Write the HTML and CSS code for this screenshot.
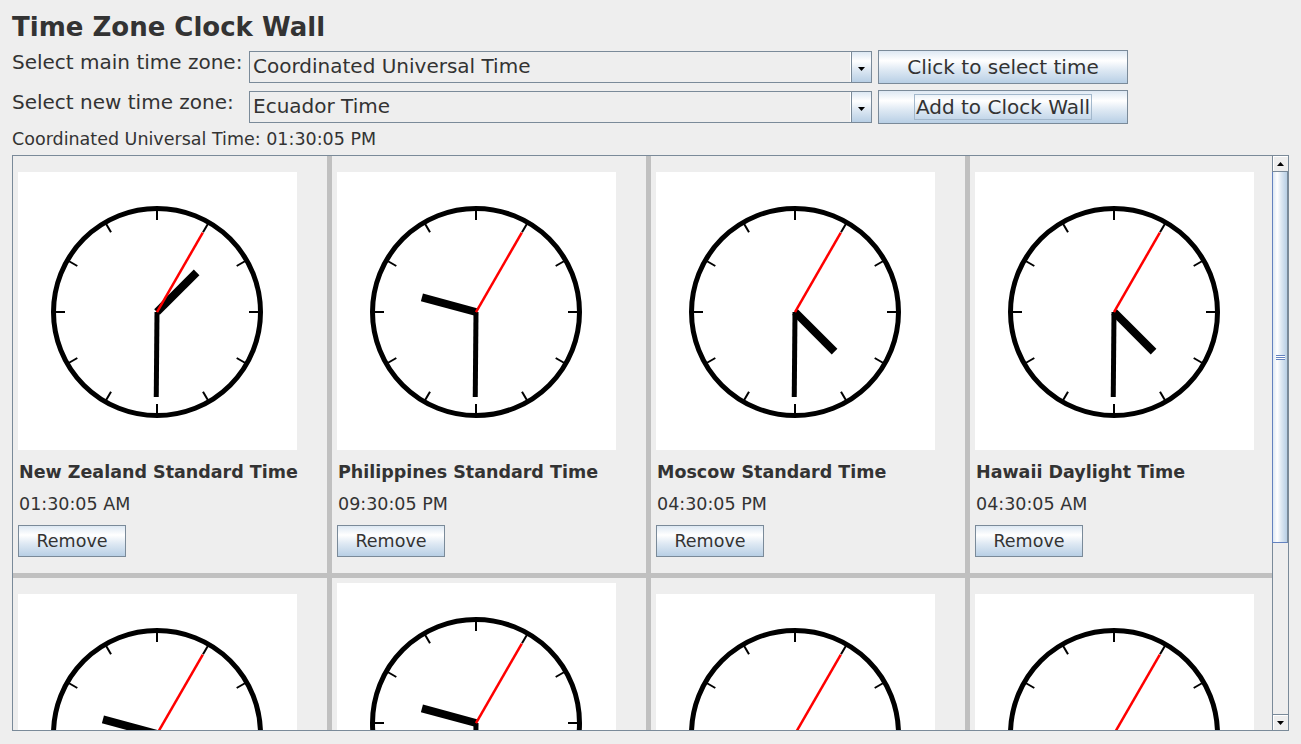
FILE: index.html
```html
<!DOCTYPE html>
<html lang="en">
<head>
<meta charset="utf-8">
<title>Time Zone Clock Wall</title>
<link rel="stylesheet" href="styles.css">
</head>
<body>
<svg class="defs" width="0" height="0" aria-hidden="true">
  <defs>
    <g id="face">
      <circle cx="139" cy="140" r="103.5" fill="none" stroke="#000" stroke-width="5"/>
      <g stroke="#000" stroke-width="2">
        <line x1="139" y1="48" x2="139" y2="38"/>
        <line x1="139" y1="48" x2="139" y2="38" transform="rotate(30 139 140)"/>
        <line x1="139" y1="48" x2="139" y2="38" transform="rotate(60 139 140)"/>
        <line x1="139" y1="48" x2="139" y2="38" transform="rotate(90 139 140)"/>
        <line x1="139" y1="48" x2="139" y2="38" transform="rotate(120 139 140)"/>
        <line x1="139" y1="48" x2="139" y2="38" transform="rotate(150 139 140)"/>
        <line x1="139" y1="48" x2="139" y2="38" transform="rotate(180 139 140)"/>
        <line x1="139" y1="48" x2="139" y2="38" transform="rotate(210 139 140)"/>
        <line x1="139" y1="48" x2="139" y2="38" transform="rotate(240 139 140)"/>
        <line x1="139" y1="48" x2="139" y2="38" transform="rotate(270 139 140)"/>
        <line x1="139" y1="48" x2="139" y2="38" transform="rotate(300 139 140)"/>
        <line x1="139" y1="48" x2="139" y2="38" transform="rotate(330 139 140)"/>
      </g>
    </g>
  </defs>
</svg>

<div class="app">
  <h1 class="title">Time Zone Clock Wall</h1>

  <div class="controls">
    <span class="ctl-label">Select main time zone:</span>
    <div class="combo">
      <span class="combo-text">Coordinated Universal Time</span>
      <span class="combo-arrow"><svg width="7" height="4" viewBox="0 0 7 4"><polygon points="0,0 7,0 3.5,4" fill="#000"/></svg></span>
    </div>
    <button class="btn" type="button">Click to select time</button>

    <span class="ctl-label">Select new time zone:</span>
    <div class="combo">
      <span class="combo-text">Ecuador Time</span>
      <span class="combo-arrow"><svg width="7" height="4" viewBox="0 0 7 4"><polygon points="0,0 7,0 3.5,4" fill="#000"/></svg></span>
    </div>
    <button class="btn" type="button"><span class="focus">Add to Clock Wall</span></button>
  </div>

  <div class="main-time">Coordinated Universal Time: 01:30:05 PM</div>

  <div class="scrollpane">
    <div class="viewport">
      <div class="wall">
        <div class="cell">
          <svg class="clock" viewBox="0 0 279 278"><use href="#face"/>
            <line class="hh" x1="139" y1="140" x2="139" y2="84" transform="rotate(45.04 139 140)"/>
            <line class="mh" x1="139" y1="140" x2="139" y2="55" transform="rotate(180.5 139 140)"/>
            <line class="sh" x1="139" y1="140" x2="139" y2="48.4" transform="rotate(30 139 140)"/>
          </svg>
          <div class="zone">New Zealand Standard Time</div>
          <div class="time">01:30:05 AM</div>
          <button class="remove" type="button">Remove</button>
        </div>
        <div class="cell">
          <svg class="clock" viewBox="0 0 279 278"><use href="#face"/>
            <line class="hh" x1="139" y1="140" x2="139" y2="84" transform="rotate(285.04 139 140)"/>
            <line class="mh" x1="139" y1="140" x2="139" y2="55" transform="rotate(180.5 139 140)"/>
            <line class="sh" x1="139" y1="140" x2="139" y2="48.4" transform="rotate(30 139 140)"/>
          </svg>
          <div class="zone">Philippines Standard Time</div>
          <div class="time">09:30:05 PM</div>
          <button class="remove" type="button">Remove</button>
        </div>
        <div class="cell">
          <svg class="clock" viewBox="0 0 279 278"><use href="#face"/>
            <line class="hh" x1="139" y1="140" x2="139" y2="84" transform="rotate(135.04 139 140)"/>
            <line class="mh" x1="139" y1="140" x2="139" y2="55" transform="rotate(180.5 139 140)"/>
            <line class="sh" x1="139" y1="140" x2="139" y2="48.4" transform="rotate(30 139 140)"/>
          </svg>
          <div class="zone">Moscow Standard Time</div>
          <div class="time">04:30:05 PM</div>
          <button class="remove" type="button">Remove</button>
        </div>
        <div class="cell">
          <svg class="clock" viewBox="0 0 279 278"><use href="#face"/>
            <line class="hh" x1="139" y1="140" x2="139" y2="84" transform="rotate(135.04 139 140)"/>
            <line class="mh" x1="139" y1="140" x2="139" y2="55" transform="rotate(180.5 139 140)"/>
            <line class="sh" x1="139" y1="140" x2="139" y2="48.4" transform="rotate(30 139 140)"/>
          </svg>
          <div class="zone">Hawaii Daylight Time</div>
          <div class="time">04:30:05 AM</div>
          <button class="remove" type="button">Remove</button>
        </div>

        <div class="cell">
          <svg class="clock" viewBox="0 0 279 278"><use href="#face"/>
            <line class="hh" x1="139" y1="140" x2="139" y2="84" transform="rotate(285.04 139 140)"/>
            <line class="mh" x1="139" y1="140" x2="139" y2="55" transform="rotate(180.5 139 140)"/>
            <line class="sh" x1="139" y1="140" x2="139" y2="48.4" transform="rotate(30 139 140)"/>
          </svg>
        </div>
        <div class="cell cell-tall">
          <svg class="clock" viewBox="0 0 279 278"><use href="#face"/>
            <line class="hh" x1="139" y1="140" x2="139" y2="84" transform="rotate(285.04 139 140)"/>
            <line class="mh" x1="139" y1="140" x2="139" y2="55" transform="rotate(180.5 139 140)"/>
            <line class="sh" x1="139" y1="140" x2="139" y2="48.4" transform="rotate(30 139 140)"/>
          </svg>
        </div>
        <div class="cell">
          <svg class="clock" viewBox="0 0 279 278"><use href="#face"/>
            <line class="hh" x1="139" y1="140" x2="139" y2="84" transform="rotate(255.04 139 140)"/>
            <line class="mh" x1="139" y1="140" x2="139" y2="55" transform="rotate(180.5 139 140)"/>
            <line class="sh" x1="139" y1="140" x2="139" y2="48.4" transform="rotate(30 139 140)"/>
          </svg>
        </div>
        <div class="cell">
          <svg class="clock" viewBox="0 0 279 278"><use href="#face"/>
            <line class="hh" x1="139" y1="140" x2="139" y2="84" transform="rotate(105.04 139 140)"/>
            <line class="mh" x1="139" y1="140" x2="139" y2="55" transform="rotate(180.5 139 140)"/>
            <line class="sh" x1="139" y1="140" x2="139" y2="48.4" transform="rotate(30 139 140)"/>
          </svg>
        </div>
      </div>
    </div>

    <div class="vscroll">
      <div class="sb-btn"><svg width="7" height="4" viewBox="0 0 7 4"><polygon points="3.5,0 7,4 0,4" fill="#000"/></svg></div>
      <div class="sb-thumb"><span class="grip"></span></div>
      <div class="sb-track"></div>
      <div class="sb-btn sb-btn-down"><svg width="7" height="4" viewBox="0 0 7 4"><polygon points="0,0 7,0 3.5,4" fill="#000"/></svg></div>
    </div>
  </div>
</div>
</body>
</html>
```

FILE: styles.css
```css
* { box-sizing: border-box; }

html, body {
  margin: 0;
  padding: 0;
  background: #eeeeee;
}

body {
  font-family: "DejaVu Sans", "Noto Sans", sans-serif;
  color: #333333;
  width: 1301px;
  height: 744px;
  overflow: hidden;
}

.defs {
  position: absolute;
  width: 0;
  height: 0;
  overflow: hidden;
}

.app {
  padding: 12px 0 0 12px;
}

.title {
  margin: 0;
  font-size: 26px;
  line-height: 30px;
  font-weight: bold;
  color: #333333;
}

/* ---------- controls ---------- */
.controls {
  display: grid;
  grid-template-columns: 237px 623px 256px;
  grid-auto-rows: 34px;
  column-gap: 0;
  row-gap: 6px;
  margin-top: 8px;
}

.ctl-label {
  align-self: start;
  font-size: 20px;
  line-height: 24px;
  white-space: nowrap;
}

.combo {
  align-self: center;
  height: 32px;
  display: flex;
  border: 1px solid #7a8a99;
  background: #eeeeee;
}

.combo-text {
  flex: 1;
  font-size: 20px;
  line-height: 28px;
  padding-left: 3px;
  white-space: nowrap;
  border-right: 1px solid #ffffff;
}

.combo-arrow {
  width: 20px;
  display: flex;
  align-items: center;
  justify-content: center;
  padding-top: 3px;
  border-left: 1px solid #7a8a99;
  background: linear-gradient(#dde8f3 0%, #ffffff 30%, #dde8f3 60%, #b8cfe5 100%);
}

.combo-arrow svg { display: block; }

.btn {
  margin: 0 0 0 6px;
  padding: 0;
  height: 34px;
  border: 1px solid #7a8a99;
  background: linear-gradient(#dde8f3 0%, #ffffff 30%, #dde8f3 60%, #b8cfe5 100%);
  font-family: "DejaVu Sans", "Noto Sans", sans-serif;
  font-size: 20px;
  line-height: 24px;
  color: #333333;
  display: flex;
  align-items: center;
  justify-content: center;
}

.focus {
  display: inline-block;
  border: 1px solid #a3b8cc;
  padding: 0 1px;
  line-height: 24px;
}

.main-time {
  margin-top: 4px;
  font-size: 17.5px;
  line-height: 22px;
  white-space: nowrap;
}

/* ---------- scroll pane ---------- */
.scrollpane {
  margin-top: 5px;
  width: 1277px;
  height: 576px;
  border: 1px solid #7a8a99;
  display: flex;
}

.viewport {
  flex: 1;
  overflow: hidden;
}

.wall {
  display: grid;
  grid-template-columns: 314px 314px 314px 1fr;
  grid-auto-rows: 417px;
  gap: 5px;
  background: #c0c0c0;
}

.cell {
  background: #eeeeee;
  padding: 16px 0 0 5px;
  display: flex;
  flex-direction: column;
  align-items: flex-start;
  overflow: hidden;
}

.cell-tall { padding-top: 5px; }

.clock {
  display: block;
  width: 279px;
  height: 278px;
  background: #ffffff;
  flex: none;
}

.hh { stroke: #000000; stroke-width: 8; }
.mh { stroke: #000000; stroke-width: 5; }
.sh { stroke: #ff0000; stroke-width: 2.5; }

.zone {
  margin-top: 11px;
  padding-left: 1px;
  font-size: 17.5px;
  line-height: 22px;
  font-weight: bold;
  white-space: nowrap;
}

.time {
  margin-top: 10px;
  padding-left: 1px;
  font-size: 17.5px;
  line-height: 22px;
  white-space: nowrap;
}

.remove {
  margin: 10px 0 0 0;
  padding: 0;
  width: 108px;
  height: 32px;
  border: 1px solid #7a8a99;
  background: linear-gradient(#dde8f3 0%, #ffffff 30%, #dde8f3 60%, #b8cfe5 100%);
  font-family: "DejaVu Sans", "Noto Sans", sans-serif;
  font-size: 17.5px;
  line-height: 22px;
  color: #333333;
}

/* ---------- scrollbar ---------- */
.vscroll {
  width: 16px;
  display: flex;
  flex-direction: column;
  background: #eeeeee;
}

.sb-btn {
  height: 16px;
  flex: none;
  display: flex;
  align-items: center;
  justify-content: center;
  border-left: 1px solid #7a8a99;
  border-bottom: 1px solid #7a8a99;
  background: #eeeeee;
  box-shadow: inset 1px 1px 0 #ffffff;
}

.sb-btn-down {
  border-bottom: none;
  border-top: 1px solid #7a8a99;
}

.sb-btn svg { display: block; }

.sb-thumb {
  height: 371px;
  flex: none;
  border: 1px solid #6382bf;
  border-right-color: #7a8a99;
  border-top: none;
  background: linear-gradient(90deg, #dde8f3 0%, #ffffff 30%, #dde8f3 60%, #b8cfe5 100%);
  display: flex;
  align-items: center;
  justify-content: center;
}

.grip {
  display: block;
  width: 9px;
  height: 5px;
  background: repeating-linear-gradient(#6382bf 0 1px, #ffffff 1px 2px);
}

.sb-track {
  flex: 1;
  border-left: 1px solid #7a8a99;
}
```
